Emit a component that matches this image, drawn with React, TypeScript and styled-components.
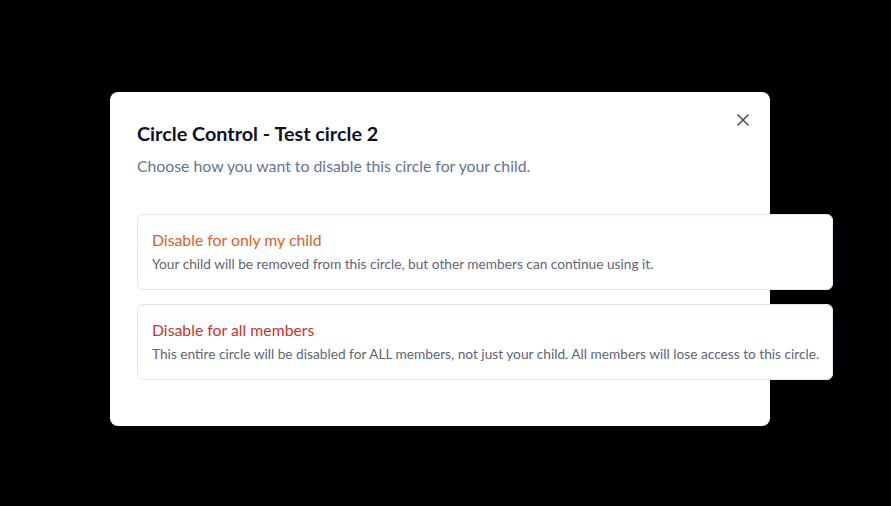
import React from "react";
import styled, { createGlobalStyle } from "styled-components";

const Global = createGlobalStyle`
  html, body { margin: 0; padding: 0; background: #000; }
  body { font-family: "Lato", "Open Sans", sans-serif; -webkit-font-smoothing: antialiased; }
  * { box-sizing: border-box; }
`;

const Overlay = styled.div`
  width: 891px;
  height: 506px;
  background: #000;
  padding: 92px 0 0 110px;
`;

const Modal = styled.div`
  position: relative;
  width: 660px;
  height: 334px;
  background: #fff;
  border-radius: 8px;
  padding: 28px 27px;
  display: flex;
  flex-direction: column;
`;

const Title = styled.h2`
  margin: 0;
  font-size: 19.8px;
  line-height: 26px;
  font-weight: 700;
  color: #0f1222;
`;

const Subtitle = styled.p`
  margin: 9px 0 0;
  font-size: 15.8px;
  line-height: 22px;
  color: #64748b;
`;

const Options = styled.div`
  margin-top: 37px;
  display: flex;
  flex-direction: column;
  gap: 14px;
  width: 696px;
`;

const Option = styled.button`
  display: flex;
  flex-direction: column;
  align-items: flex-start;
  gap: 5px;
  height: 76px;
  padding: 15px 14px;
  background: #fff;
  border: 1px solid #e2e8f0;
  border-radius: 6px;
  text-align: left;
  cursor: pointer;
  font-family: inherit;
`;

const OptionTitle = styled.span<{ $tone: string }>`
  font-size: 15.8px;
  line-height: 20px;
  white-space: nowrap;
  color: ${(p) => p.$tone};
`;

const OptionText = styled.span`
  font-size: 13.7px;
  line-height: 18px;
  white-space: nowrap;
  color: #5f6573;
`;

const Close = styled.button`
  position: absolute;
  top: 15px;
  right: 14px;
  width: 26px;
  height: 26px;
  border: none;
  background: transparent;
  padding: 0;
  display: flex;
  align-items: center;
  justify-content: center;
  color: #4a5060;
  cursor: pointer;
`;

export default function App() {
  return (
    <>
      <Global />
      <Overlay>
        <Modal>
          <Close aria-label="Close">
            <svg width="12" height="12" viewBox="0 0 12 12" fill="none">
              <path d="M1 1L11 11M11 1L1 11" stroke="currentColor" strokeWidth="1.6" strokeLinecap="round" />
            </svg>
          </Close>
          <Title>Circle Control - Test circle 2</Title>
          <Subtitle>Choose how you want to disable this circle for your child.</Subtitle>
          <Options>
            <Option>
              <OptionTitle $tone="#d5621f">Disable for only my child</OptionTitle>
              <OptionText>Your child will be removed from this circle, but other members can continue using it.</OptionText>
            </Option>
            <Option>
              <OptionTitle $tone="#c6342b">Disable for all members</OptionTitle>
              <OptionText>
                This entire circle will be disabled for ALL members, not just your child. All members will lose access to this circle.
              </OptionText>
            </Option>
          </Options>
        </Modal>
      </Overlay>
    </>
  );
}
